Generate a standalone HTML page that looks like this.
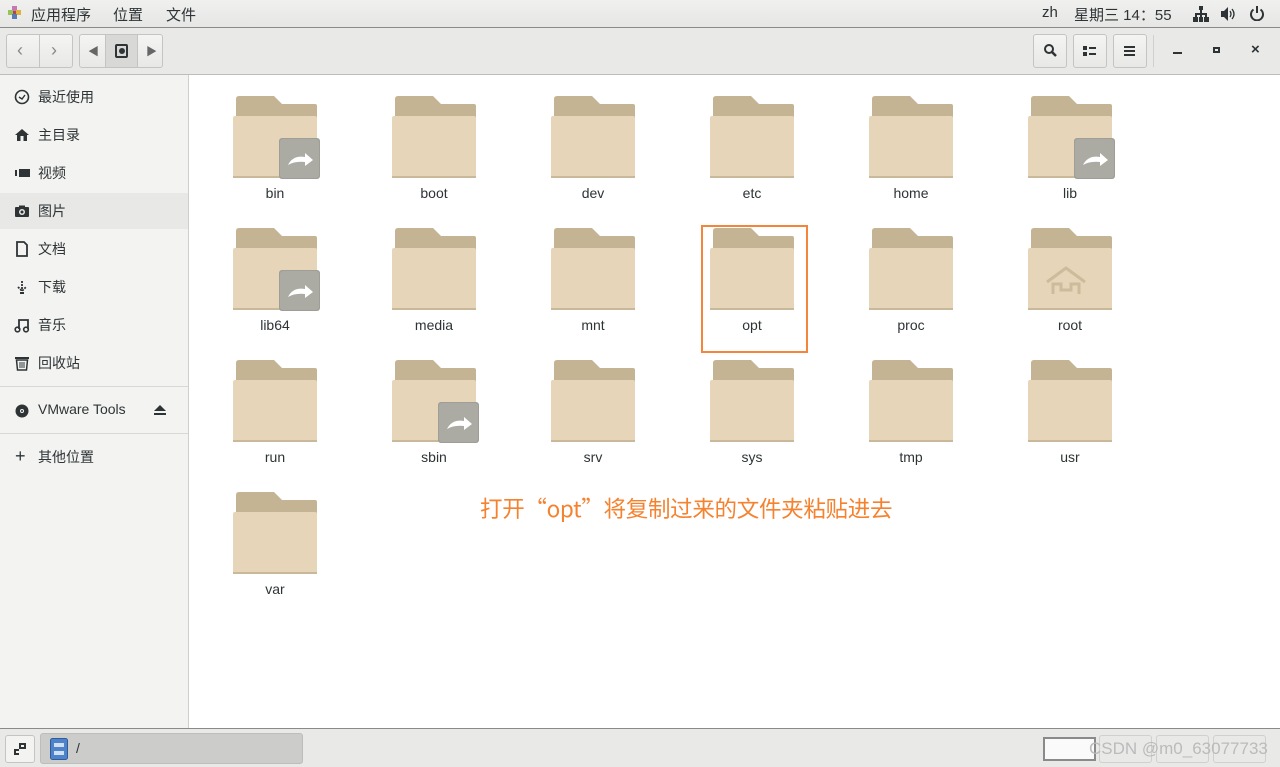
<!DOCTYPE html>
<html><head><meta charset="utf-8"><style>
*{margin:0;padding:0;box-sizing:border-box}
body{width:1280px;height:767px;overflow:hidden;position:relative;background:#fff;font-family:"Liberation Sans","Noto Sans CJK SC",sans-serif;font-size:14px;color:#2e3436}
.a{position:absolute}
#top{left:0;top:0;width:1280px;height:28px;background:linear-gradient(#f0f0ef,#e6e6e5);border-bottom:1px solid #8a8a8a}
#tb{left:0;top:28px;width:1280px;height:47px;background:#e9e9e8;border-bottom:1px solid #bdbdbc}
#side{left:0;top:75px;width:189px;height:654px;background:#f3f3f2;border-right:1px solid #cfcfcd}
#bot{left:0;top:728px;width:1280px;height:39px;background:#e9e9e8;border-top:1px solid #8a8a8a}
.btn{position:absolute;border:1px solid #c4c4c2;border-radius:3px;background:linear-gradient(#f4f4f3,#e8e8e7);height:34px;top:34px}
.si{position:absolute;left:38px;font-size:14px}
.lab{position:absolute;width:120px;text-align:center;font-size:14px;color:#2e3436}
</style></head><body>
<div id="top" class="a">
 <svg class="a" style="left:8px;top:6px" width="14" height="14" viewBox="0 0 14 14"><rect x="4" y="0" width="5" height="5" fill="#c27ab0"/><rect x="0" y="4" width="5" height="5" fill="#9ac25a"/><rect x="8" y="4" width="5" height="5" fill="#e0b040"/><rect x="4" y="8" width="5" height="5" fill="#5a7ab8"/><rect x="5" y="5" width="3" height="3" fill="#b04848"/></svg>
 <span class="a" style="left:31px;top:4px;font-size:15px">应用程序</span>
 <span class="a" style="left:113px;top:4px;font-size:15px">位置</span>
 <span class="a" style="left:166px;top:4px;font-size:15px">文件</span>
 <span class="a" style="left:1042px;top:4px;font-size:15px">zh</span>
 <span class="a" style="left:1074px;top:4px;font-size:15px">星期三 14：55</span>
 <svg class="a" style="left:1193px;top:6px" width="16" height="16" viewBox="0 0 16 16" fill="#2e3436"><rect x="6" y="0" width="4" height="4"/><rect x="7" y="4" width="2" height="3"/><rect x="2" y="7" width="12" height="2"/><rect x="2" y="8" width="2" height="3"/><rect x="12" y="8" width="2" height="3"/><rect x="0" y="11" width="5" height="5"/><rect x="11" y="11" width="5" height="5"/><rect x="7" y="8" width="2" height="3"/><rect x="6" y="11" width="4" height="5"/></svg>
 <svg class="a" style="left:1220px;top:6px" width="16" height="16" viewBox="0 0 16 16"><path d="M1 5h3l4-4v14l-4-4H1z" fill="#2e3436"/><path d="M10 5q2 3 0 6M12 3q4 5 0 10" stroke="#2e3436" stroke-width="1.3" fill="none"/></svg>
 <svg class="a" style="left:1249px;top:5px" width="16" height="16" viewBox="0 0 16 16"><path d="M4.5 4.5a6 6 0 1 0 7 0" stroke="#2e3436" stroke-width="2" fill="none"/><rect x="7" y="1" width="2" height="7" fill="#2e3436"/></svg>
</div>
<div id="tb" class="a"></div>
<div class="btn" style="left:6px;width:67px"></div>
<div class="a" style="left:39px;top:35px;width:1px;height:32px;background:#c4c4c2"></div>
<span class="a" style="left:17px;top:40px;font-size:18px;color:#888">&lsaquo;</span>
<span class="a" style="left:51px;top:40px;font-size:18px;color:#888">&rsaquo;</span>
<div class="btn" style="left:79px;width:84px"></div>
<div class="a" style="left:105px;top:35px;width:33px;height:32px;background:#d8d8d6;border-left:1px solid #c4c4c2;border-right:1px solid #c4c4c2"></div>
<span class="a" style="left:88px;top:43px;font-size:11px;color:#666">◀</span>
<span class="a" style="left:146px;top:43px;font-size:11px;color:#666">▶</span>
<div class="a" style="left:115px;top:44px;width:13px;height:14px;border:2px solid #2e3436;border-radius:2px"></div>
<div class="a" style="left:119px;top:48px;width:6px;height:6px;background:#2e3436;border-radius:50%"></div>
<div class="btn" style="left:1033px;width:34px"></div>
<div class="btn" style="left:1073px;width:34px"></div>
<div class="btn" style="left:1113px;width:34px"></div>
<svg class="a" style="left:1043px;top:43px" width="15" height="15" viewBox="0 0 15 15"><circle cx="6" cy="6" r="4" stroke="#2e3436" stroke-width="2" fill="none"/><path d="M9 9l4 4" stroke="#2e3436" stroke-width="2.5"/></svg>
<svg class="a" style="left:1083px;top:45px" width="14" height="12" viewBox="0 0 14 12" fill="#2e3436"><rect x="0" y="1" width="4" height="4"/><rect x="6" y="2" width="7" height="2"/><rect x="0" y="7" width="4" height="4"/><rect x="6" y="8" width="7" height="2"/></svg>
<svg class="a" style="left:1123px;top:45px" width="14" height="12" viewBox="0 0 14 12" fill="#2e3436"><rect x="1" y="1" width="11" height="2"/><rect x="1" y="5" width="11" height="2"/><rect x="1" y="9" width="11" height="2"/></svg>
<div class="a" style="left:1153px;top:35px;width:1px;height:32px;background:#d0d0ce"></div>
<div class="a" style="left:1173px;top:52px;width:9px;height:2px;background:#2e3436"></div>
<div class="a" style="left:1213px;top:47px;width:7px;height:6px;border:2px solid #2e3436"></div>
<span class="a" style="left:1251px;top:41px;font-size:15px;font-weight:bold">×</span>
<div id="side" class="a"></div>
<div class="a" style="left:0;top:193px;width:188px;height:36px;background:#e8e8e7"></div>
<svg class="a" style="left:14px;top:89px" width="16" height="16" viewBox="0 0 16 16"><circle cx="8" cy="8" r="6.5" stroke="#2e3436" stroke-width="1.6" fill="none"/><path d="M5 8l3 2 3-4" stroke="#2e3436" stroke-width="1.4" fill="none"/></svg>
<span class="si" style="top:87px">最近使用</span>
<svg class="a" style="left:14px;top:127px" width="16" height="16" viewBox="0 0 16 16"><path d="M1 8l7-6 7 6h-2v6H3V8z" fill="#2e3436"/><rect x="6.5" y="9" width="3" height="5" fill="#f3f3f2"/></svg>
<span class="si" style="top:125px">主目录</span>
<svg class="a" style="left:14px;top:165px" width="16" height="16" viewBox="0 0 16 16" fill="#2e3436"><rect x="5" y="4" width="11" height="8"/><rect x="1" y="5" width="2" height="6"/></svg>
<span class="si" style="top:163px">视频</span>
<svg class="a" style="left:14px;top:203px" width="16" height="16" viewBox="0 0 16 16"><rect x="1" y="4" width="14" height="10" rx="1" fill="#2e3436"/><rect x="5" y="2.5" width="6" height="2" fill="#2e3436"/><circle cx="8" cy="9" r="3" fill="#e8e8e7"/><circle cx="8" cy="9" r="1.5" fill="#2e3436"/></svg>
<span class="si" style="top:201px">图片</span>
<svg class="a" style="left:14px;top:241px" width="16" height="16" viewBox="0 0 16 16"><path d="M3 1h7l3 3v11H3z" stroke="#2e3436" stroke-width="1.8" fill="none"/></svg>
<span class="si" style="top:239px">文档</span>
<svg class="a" style="left:14px;top:279px" width="16" height="16" viewBox="0 0 16 16"><path d="M8 2v10M4 8l4 4 4-4" stroke="#2e3436" stroke-width="1.8" fill="none" stroke-dasharray="2 1"/><rect x="6" y="13" width="4" height="2" fill="#2e3436"/></svg>
<span class="si" style="top:277px">下载</span>
<svg class="a" style="left:14px;top:317px" width="16" height="16" viewBox="0 0 16 16"><path d="M5 12V3h9v9" stroke="#2e3436" stroke-width="1.8" fill="none"/><circle cx="3.5" cy="12.5" r="2.3" stroke="#2e3436" stroke-width="1.6" fill="none"/><circle cx="12" cy="12.5" r="2.3" stroke="#2e3436" stroke-width="1.6" fill="none"/></svg>
<span class="si" style="top:315px">音乐</span>
<svg class="a" style="left:14px;top:355px" width="16" height="16" viewBox="0 0 16 16"><rect x="1" y="2" width="14" height="2" fill="#2e3436"/><path d="M2.5 5h11l-1 10h-9z" stroke="#2e3436" stroke-width="1.5" fill="none"/><path d="M6 7v6M8 7v6M10 7v6" stroke="#2e3436"/></svg>
<span class="si" style="top:353px">回收站</span>
<div class="a" style="left:0;top:386px;width:188px;height:1px;background:#d8d8d6"></div>
<svg class="a" style="left:14px;top:403px" width="16" height="16" viewBox="0 0 16 16"><circle cx="8" cy="8" r="6.5" fill="#2e3436"/><circle cx="8" cy="8" r="2" fill="#f3f3f2"/><circle cx="8" cy="8" r="1" fill="#2e3436"/></svg>
<span class="si" style="top:401px">VMware Tools</span>
<svg class="a" style="left:152px;top:403px" width="16" height="14" viewBox="0 0 16 14" fill="#2e3436"><path d="M8 2l6 6H2z"/><rect x="2" y="10" width="12" height="2"/></svg>
<div class="a" style="left:0;top:433px;width:188px;height:1px;background:#d8d8d6"></div>
<span class="a" style="left:15px;top:446px;font-size:18px">+</span>
<span class="si" style="top:447px">其他位置</span>
<div id="grid"></div>
<div class="a" style="left:701px;top:225px;width:107px;height:128px;border:2px solid #f5853a"></div>
<div class="a" style="left:480px;top:492px;font-size:22.5px;color:#f5822f;font-family:'Noto Sans CJK SC',sans-serif;letter-spacing:-0.3px;white-space:nowrap">打开“opt”将复制过来的文件夹粘贴进去</div>
<div id="bot" class="a"></div>
<div class="a" style="left:5px;top:735px;width:30px;height:28px;border:1px solid #c4c4c2;border-radius:3px;background:#f3f3f2"></div>
<svg class="a" style="left:12px;top:741px" width="16" height="16" viewBox="0 0 16 16" fill="#2e3436"><rect x="7" y="2" width="7" height="6"/><rect x="9" y="4" width="3" height="2" fill="#f3f3f2"/><rect x="2" y="8" width="5" height="6"/><rect x="4" y="10" width="3" height="2" fill="#f3f3f2"/></svg>
<div class="a" style="left:40px;top:733px;width:263px;height:31px;border:1px solid #bdbdbc;border-radius:3px;background:#cccccb"></div>
<svg class="a" style="left:50px;top:738px" width="18" height="22" viewBox="0 0 18 22"><rect x="0.5" y="0.5" width="17" height="21" rx="2" fill="#4f83c9" stroke="#2e5c9a"/><rect x="4" y="5" width="10" height="4" fill="#cfe0f5"/><rect x="4" y="13" width="10" height="4" fill="#cfe0f5"/></svg>
<span class="a" style="left:76px;top:740px;font-size:14px">/</span>
<div class="a" style="left:1043px;top:737px;width:53px;height:24px;border:2px solid #8a8a8a;background:#fafafa"></div>
<div class="a" style="left:1099px;top:735px;width:53px;height:28px;border:1px solid #d0d0ce;border-radius:3px"></div>
<div class="a" style="left:1156px;top:735px;width:53px;height:28px;border:1px solid #d0d0ce;border-radius:3px"></div>
<div class="a" style="left:1213px;top:735px;width:53px;height:28px;border:1px solid #d0d0ce;border-radius:3px"></div>
<span class="a" style="left:1089px;top:739px;font-size:17px;color:#bbb">CSDN @m0_63077733</span>
<script>
var names=["bin","boot","dev","etc","home","lib","lib64","media","mnt","opt","proc","root","run","sbin","srv","sys","tmp","usr","var"];
var links={bin:1,lib:1,lib64:1,sbin:1};
var h="";
names.forEach(function(n,i){
 var c=i%6,r=Math.floor(i/6);var x=233+c*159,y=96+r*132;
 var s='<svg class="a" style="left:'+x+'px;top:'+y+'px" width="90" height="86" viewBox="0 0 90 86">'+
 '<path d="M3 3q0-3 3-3h35l8 8h33q2 0 2 2v60H3z" fill="#c4b494"/>'+
 '<rect x="0" y="20" width="84" height="62" rx="2" fill="#e6d5b9"/><rect x="0" y="80" width="84" height="2" fill="#c9b99a"/>';
 if(links[n]) s+='<rect x="46" y="42" width="41" height="41" rx="3" fill="#9e9e96"/><rect x="47" y="43" width="39" height="39" rx="3" fill="#ababa3"/><path d="M55 69q5-10 17-8v-4l8 7-8 6v-4q-10-1-17 3z" fill="#fff"/>';
 if(n=="root") s+='<path d="M19 54l19-14 19 14" stroke="#cdbb9c" stroke-width="3" fill="none"/><path d="M25 66v-10h8v6h10v-6h8v10" stroke="#cdbb9c" stroke-width="3" fill="none"/>';
 s+='</svg><div class="lab" style="left:'+(x+42-60)+'px;top:'+(y+89)+'px">'+n+'</div>';
 h+=s;});
document.getElementById("grid").innerHTML=h;
</script>
</body></html>
